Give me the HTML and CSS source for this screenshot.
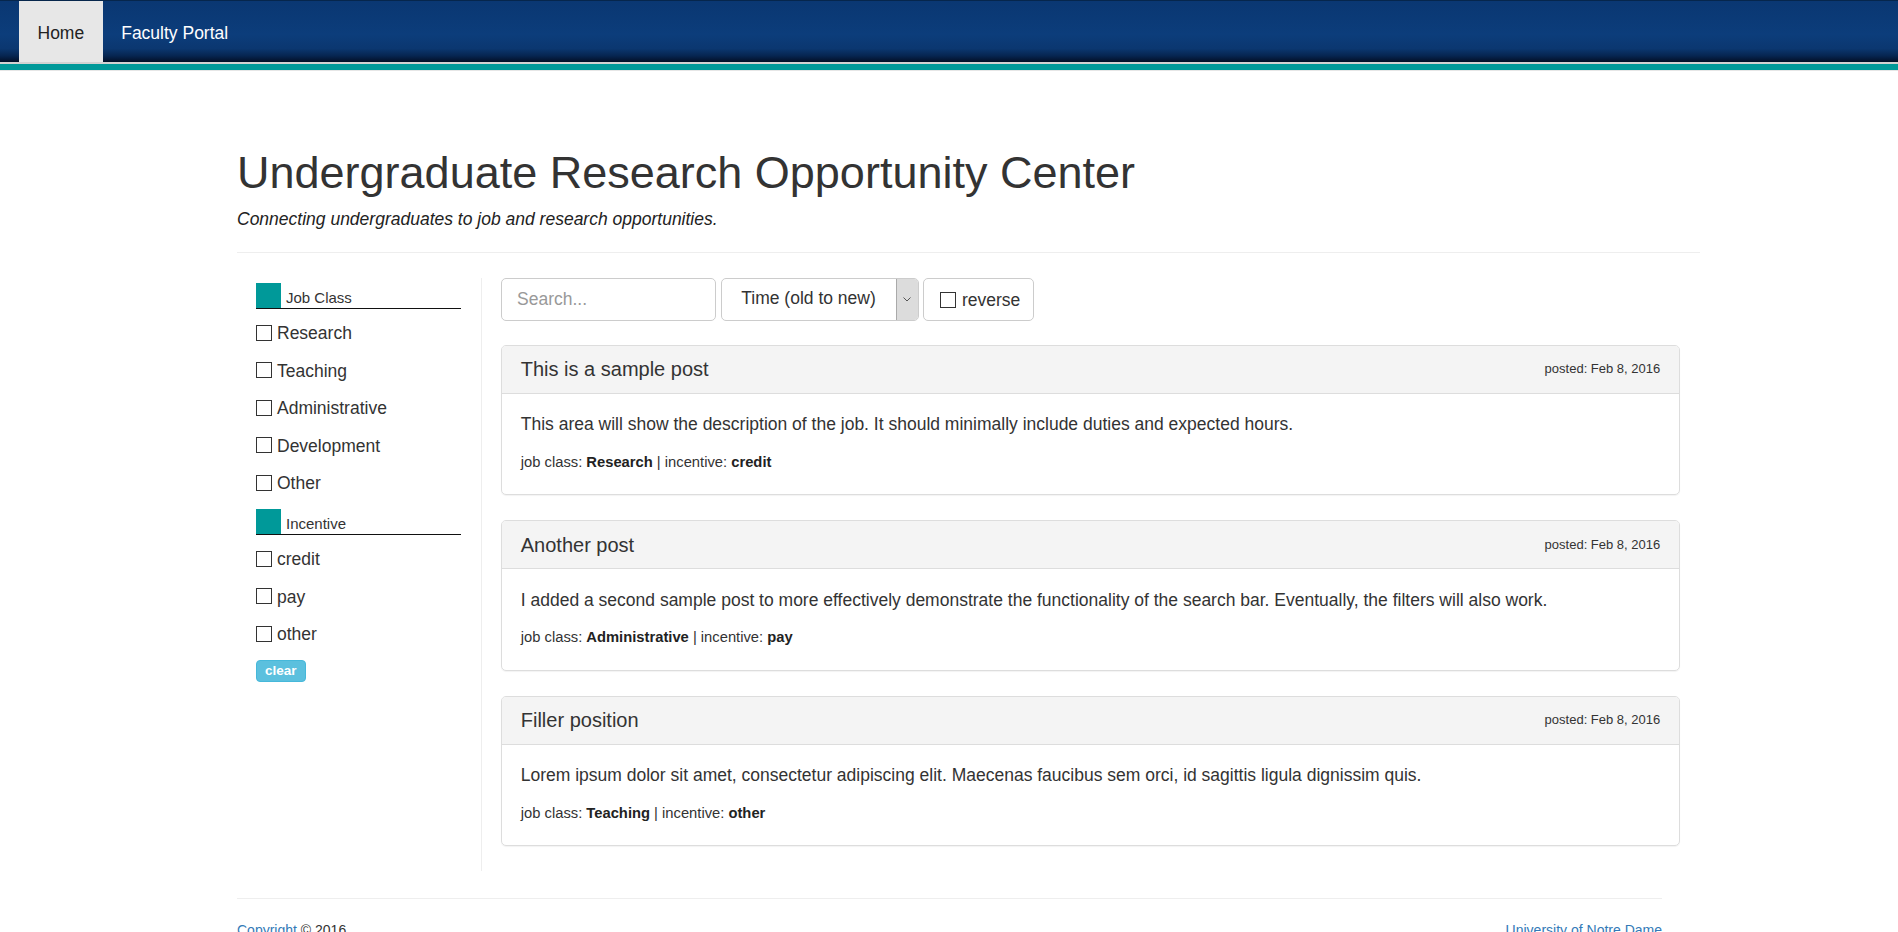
FILE: index.html
```html
<!DOCTYPE html>
<html lang="en">
<head>
<meta charset="utf-8">
<title>Undergraduate Research Opportunity Center</title>
<link rel="stylesheet" href="styles.css">
</head>
<body>
<nav class="topbar">
  <ul class="nav-links">
    <li class="nav-item active"><a href="#">Home</a></li>
    <li class="nav-item"><a href="#">Faculty Portal</a></li>
  </ul>
</nav>
<div class="stripe"></div>

<div class="page">
  <header class="intro">
    <h1 class="title">Undergraduate Research Opportunity Center</h1>
    <p class="tagline">Connecting undergraduates to job and research opportunities.</p>
  </header>
  <hr class="rule">

  <div class="layout">
    <aside class="filters">
      <div class="filter-head first"><span class="swatch"></span><span class="filter-label">Job Class</span></div>
      <label class="check"><span class="box"></span><span>Research</span></label>
      <label class="check"><span class="box"></span><span>Teaching</span></label>
      <label class="check"><span class="box"></span><span>Administrative</span></label>
      <label class="check"><span class="box"></span><span>Development</span></label>
      <label class="check"><span class="box"></span><span>Other</span></label>
      <div class="filter-head"><span class="swatch"></span><span class="filter-label">Incentive</span></div>
      <label class="check"><span class="box"></span><span>credit</span></label>
      <label class="check"><span class="box"></span><span>pay</span></label>
      <label class="check"><span class="box"></span><span>other</span></label>
      <button class="clear-btn">clear</button>
    </aside>

    <main class="posts">
      <div class="controls">
        <div class="search">Search...</div>
        <div class="sort">
          <span class="sort-text">Time (old to new)</span>
          <span class="sort-arrow"><svg width="8" height="5" viewBox="0 0 8 5"><path d="M0.5 0.5 L4 4 L7.5 0.5" fill="none" stroke="#555" stroke-width="1"/></svg></span>
        </div>
        <label class="reverse"><span class="box"></span><span>reverse</span></label>
      </div>

      <article class="panel">
        <div class="panel-head"><h3 class="panel-title">This is a sample post</h3><span class="posted">posted: Feb 8, 2016</span></div>
        <div class="panel-body">
          <p class="desc">This area will show the description of the job. It should minimally include duties and expected hours.</p>
          <div class="meta">job class: <b>Research</b> | incentive: <b>credit</b></div>
        </div>
      </article>

      <article class="panel">
        <div class="panel-head"><h3 class="panel-title">Another post</h3><span class="posted">posted: Feb 8, 2016</span></div>
        <div class="panel-body">
          <p class="desc">I added a second sample post to more effectively demonstrate the functionality of the search bar. Eventually, the filters will also work.</p>
          <div class="meta">job class: <b>Administrative</b> | incentive: <b>pay</b></div>
        </div>
      </article>

      <article class="panel">
        <div class="panel-head"><h3 class="panel-title">Filler position</h3><span class="posted">posted: Feb 8, 2016</span></div>
        <div class="panel-body">
          <p class="desc">Lorem ipsum dolor sit amet, consectetur adipiscing elit. Maecenas faucibus sem orci, id sagittis ligula dignissim quis.</p>
          <div class="meta">job class: <b>Teaching</b> | incentive: <b>other</b></div>
        </div>
      </article>
    </main>
  </div>

  <footer class="footer">
    <hr class="foot-rule">
    <div class="foot-row">
      <span><a href="#">Copyright</a> © 2016</span>
      <a href="#">University of Notre Dame</a>
    </div>
  </footer>
</div>
</body>
</html>
```

FILE: styles.css
```css
html, body {
  margin: 0;
  padding: 0;
  background: #fff;
}
body {
  font-family: "Liberation Sans", Arial, sans-serif;
  font-size: 17.5px;
  line-height: 25px;
  color: #333;
}
a {
  color: #337ab7;
  text-decoration: none;
}

/* top navigation */
.topbar {
  height: 61px;
  border-top: 1px solid #06264c;
  background: linear-gradient(to bottom, #0a3772 0%, #0c3d7b 55%, #0b3770 78%, #062550 90%, #020f26 100%);
}
.nav-links {
  list-style: none;
  margin: 0;
  padding: 0 0 0 19px;
  display: flex;
  height: 61px;
}
.nav-item a {
  display: block;
  box-sizing: border-box;
  height: 61px;
  padding: 7px 18.5px 0;
  line-height: 51px;
  color: #fff;
  font-size: 17.5px;
}
.nav-item.active a {
  background: #e7e7e7;
  color: #222;
}
.stripe {
  height: 6px;
  background: #009999;
  border-top: 2px solid #d2d2d2;
  border-bottom: 1px solid #e6e6e6;
}

/* page */
.page {
  margin-left: 237px;
  width: 1463px;
}
.intro {
  padding-top: 77px;
}
.title {
  margin: 0;
  font-size: 45px;
  line-height: 49.5px;
  font-weight: normal;
  color: #333;
}
.tagline {
  margin: 9px 0 0;
  font-style: italic;
  font-size: 17.5px;
  line-height: 25px;
  color: #222;
}
.rule {
  margin: 20px 0 0;
  border: 0;
  border-top: 1px solid #eee;
}

.layout {
  display: flex;
  margin-top: 25px;
}

/* sidebar */
.filters {
  box-sizing: border-box;
  width: 245px;
  padding: 5px 20px 0 19px;
  border-right: 1px solid #eee;
}
.filter-head {
  display: flex;
  align-items: flex-end;
  border-bottom: 1px solid #111;
  margin-top: 12px;
}
.filter-head.first {
  margin-top: 0;
}
.swatch {
  width: 25px;
  height: 25px;
  background: #009999;
  flex: none;
}
.filter-label {
  padding-left: 5px;
  font-size: 15px;
  line-height: 20px;
  color: #333;
}
.check {
  display: flex;
  align-items: center;
  gap: 5px;
  margin: 12.5px 0;
  height: 25px;
  font-size: 17.5px;
  color: #333;
}
.box {
  box-sizing: border-box;
  width: 16px;
  height: 16px;
  border: 1px solid #333;
  background: #fff;
  flex: none;
  margin-top: -2px;
}
.clear-btn {
  display: block;
  margin-top: 7px;
  height: 22px;
  padding: 0 8px;
  border: 1px solid #46b8da;
  border-radius: 4px;
  background: #5bc0de;
  color: #fff;
  font-family: "Liberation Sans", Arial, sans-serif;
  font-weight: bold;
  font-size: 13.5px;
  line-height: 20px;
}

/* posts column */
.posts {
  flex: 1;
  padding: 0 20px 0 19px;
}
.controls {
  display: flex;
  gap: 4.5px;
  margin-bottom: 24px;
}
.search, .sort, .reverse {
  box-sizing: border-box;
  height: 43px;
  border: 1px solid #ccc;
  border-radius: 5px;
  background: #fff;
}
.search {
  width: 215px;
  padding: 0 15px;
  line-height: 41px;
  color: #999;
}
.sort {
  width: 198px;
  display: flex;
  overflow: hidden;
}
.sort-text {
  flex: 1;
  text-align: center;
  line-height: 39px;
  color: #333;
}
.sort-arrow {
  width: 21px;
  background: #dcdcdc;
  border-left: 1px solid #aaa;
  display: flex;
  align-items: center;
  justify-content: center;
}
.reverse {
  width: 111px;
  display: flex;
  align-items: center;
  gap: 6px;
  padding: 3px 0 0 16px;
  color: #333;
}

.panel {
  border: 1px solid #ddd;
  border-radius: 5px;
  margin-bottom: 25px;
  box-shadow: 0 1px 1px rgba(0, 0, 0, 0.05);
  overflow: hidden;
}
.panel-head {
  display: flex;
  justify-content: space-between;
  align-items: center;
  padding: 12.5px 18.75px;
  background: #f4f4f4;
  border-bottom: 1px solid #ddd;
}
.panel-title {
  margin: 0;
  font-size: 20px;
  line-height: 22px;
  font-weight: normal;
  color: #333;
}
.posted {
  font-size: 13px;
  line-height: 22px;
  color: #333;
}
.panel-body {
  padding: 18.75px 18.75px 19.25px;
}
.desc {
  margin: 0 0 12.5px;
  font-size: 17.5px;
  line-height: 25px;
  color: #333;
}
.meta {
  font-size: 14.75px;
  line-height: 25px;
  color: #333;
}
.meta b {
  color: #222;
}

/* footer */
.footer {
  width: 1425px;
  margin-top: 27px;
}
.foot-rule {
  margin: 0 0 21px;
  border: 0;
  border-top: 1px solid #eee;
}
.foot-row {
  display: flex;
  justify-content: space-between;
  font-size: 14px;
  line-height: 20px;
}
```
